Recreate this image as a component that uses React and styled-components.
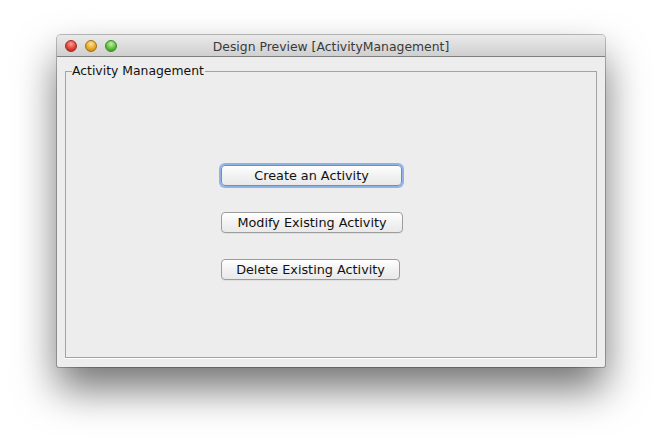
import React from "react";
import styled, { createGlobalStyle } from "styled-components";

const Global = createGlobalStyle`
  html, body { margin: 0; padding: 0; background: #ffffff; }
  body { font-family: "DejaVu Sans", "Liberation Sans", sans-serif; }
`;

const Stage = styled.div`
  width: 662px;
  height: 446px;
  padding: 35px 0 0 57px;
  box-sizing: border-box;
  overflow: hidden;
`;

const Window = styled.div`
  width: 548px;
  height: 332px;
  display: flex;
  flex-direction: column;
  border-radius: 4px 4px 2px 2px;
  background: #ededed;
  box-shadow: 0 22px 40px rgba(0, 0, 0, 0.55), 0 0 0 1px rgba(0, 0, 0, 0.25);
  overflow: hidden;
`;

const TitleBar = styled.div`
  position: relative;
  flex: none;
  display: flex;
  align-items: center;
  justify-content: center;
  padding-top: 1px;
  box-sizing: border-box;
  height: 22px;
  background: linear-gradient(#eaeaea, #cfcfcf);
  border-bottom: 1px solid #7f7f7f;
  font-size: 12.4px;
  color: #3a3a3a;
`;

const Lights = styled.div`
  position: absolute;
  left: 8px;
  top: 5px;
  display: flex;
  gap: 8px;
`;

const Light = styled.span`
  width: 12px;
  height: 12px;
  border-radius: 50%;
  box-sizing: border-box;
  border: 1px solid ${(p) => p.$edge};
  background: radial-gradient(circle at 50% 30%, ${(p) => p.$hi} 0%, ${(p) => p.$c} 55%, ${(p) => p.$d} 100%);
`;

const Body = styled.div`
  flex: 1;
  display: flex;
  padding: 7px 8px 9px 8px;
`;

const Group = styled.fieldset`
  flex: 1;
  margin: 0;
  padding: 0;
  border: 1px solid #a3a3a3;
  box-shadow: 0 1px 0 #ffffff;
  display: flex;
`;

const Legend = styled.legend`
  font-size: 12.4px;
  color: #111;
  padding: 0 1px 0 0;
  margin-left: 6px;
  line-height: 14px;
`;

const Stack = styled.div`
  display: flex;
  flex-direction: column;
  align-items: flex-start;
  gap: 26px;
  padding: 87px 0 0 155px;
`;

const Button = styled.button`
  height: 21px;
  width: ${(p) => p.$w}px;
  box-sizing: border-box;
  font-family: "DejaVu Sans", sans-serif;
  font-size: 12.8px;
  color: #111;
  border: 1px solid ${(p) => (p.$focus ? "#6a8fc0" : "#9c9c9c")};
  border-radius: 4px;
  background: linear-gradient(#ffffff, #f2f2f2 50%, #e9e9e9);
  box-shadow: ${(p) => (p.$focus ? "0 0 0 2px #8db4e4" : "0 1px 0 rgba(0,0,0,0.05)")};
  padding: 0;
  margin: 0;
`;

export default function App() {
  return (
    <Stage>
      <Global />
      <Window>
        <TitleBar>
          <Lights>
            <Light $c="#e0443a" $d="#a8190f" $hi="#ff9c94" $edge="#9a2a22" />
            <Light $c="#e8a92a" $d="#b57708" $hi="#ffe39a" $edge="#a07018" />
            <Light $c="#5fbf40" $d="#2b8a14" $hi="#c2f0a6" $edge="#3a8a28" />
          </Lights>
          Design Preview [ActivityManagement]
        </TitleBar>
        <Body>
          <Group>
            <Legend>Activity Management</Legend>
            <Stack>
              <Button $w={181} $focus>Create an Activity</Button>
              <Button $w={182}>Modify Existing Activity</Button>
              <Button $w={179}>Delete Existing Activity</Button>
            </Stack>
          </Group>
        </Body>
      </Window>
    </Stage>
  );
}
